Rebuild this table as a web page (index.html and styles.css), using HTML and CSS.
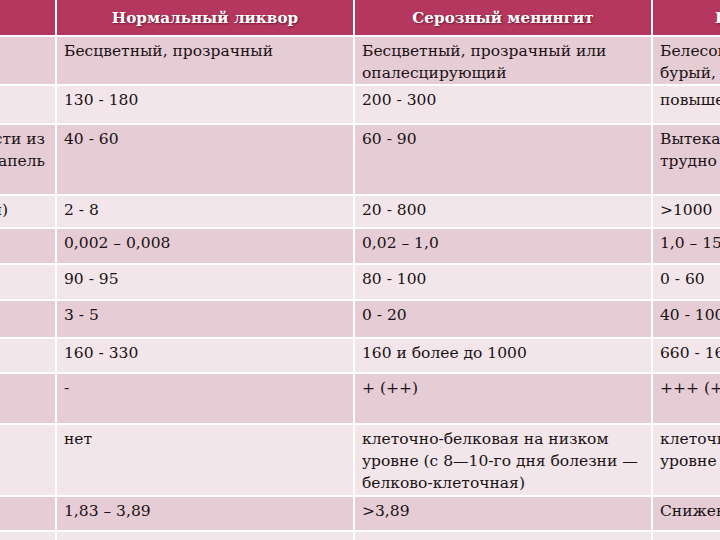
FILE: index.html
```html
<!DOCTYPE html>
<html lang="ru">
<head>
<meta charset="utf-8">
<link rel="stylesheet" href="styles.css">
<title>Ликвор</title>
</head>
<body>
<table class="csf">
  <colgroup>
    <col class="c"><col class="c"><col class="c"><col class="c">
  </colgroup>
  <thead>
    <tr class="head">
      <th></th>
      <th>Нормальный ликвор</th>
      <th>Серозный менингит</th>
      <th>Гнойный менингит</th>
    </tr>
  </thead>
  <tbody>
    <tr class="dark h47">
      <td class="label">Цвет, прозрачность</td>
      <td>Бесцветный, прозрачный</td>
      <td>Бесцветный, прозрачный или опалесцирующий</td>
      <td>Белесоватый, мутный, гнойный<br>бурый, зеленоватый</td>
    </tr>
    <tr class="light h37">
      <td class="label">Давление</td>
      <td>130 - 180</td>
      <td>200 - 300</td>
      <td>повышено</td>
    </tr>
    <tr class="dark h69">
      <td class="label tail">Скорость вытекания жидкости из<br>иглы, количество капель</td>
      <td>40 - 60</td>
      <td>60 - 90</td>
      <td>Вытекает редкими каплями,<br>трудно</td>
    </tr>
    <tr class="light h31">
      <td class="label tail short">Цитоз (кл. в 1 мкл)</td>
      <td>2 - 8</td>
      <td>20 - 800</td>
      <td>&gt;1000</td>
    </tr>
    <tr class="dark h34">
      <td class="label">Белок, г/л</td>
      <td>0,002 – 0,008</td>
      <td>0,02 – 1,0</td>
      <td>1,0 – 15,0</td>
    </tr>
    <tr class="light h34">
      <td class="label">Лимфоциты, %</td>
      <td>90 - 95</td>
      <td>80 - 100</td>
      <td>0 - 60</td>
    </tr>
    <tr class="dark h36">
      <td class="label">Нейтрофилы, %</td>
      <td>3 - 5</td>
      <td>0 - 20</td>
      <td>40 - 100</td>
    </tr>
    <tr class="light h33">
      <td class="label">Белок, мг/л</td>
      <td>160 - 330</td>
      <td>160 и более до 1000</td>
      <td>660 - 1600</td>
    </tr>
    <tr class="dark h49">
      <td class="label">Реакция Панди</td>
      <td>-</td>
      <td>+ (++)</td>
      <td>+++ (++++)</td>
    </tr>
    <tr class="light h70">
      <td class="label">Диссоциация</td>
      <td>нет</td>
      <td>клеточно-белковая на низком уровне (с 8—10-го дня болезни — белково-клеточная)</td>
      <td>клеточно-белковая на высоком<br>уровне</td>
    </tr>
    <tr class="dark h33">
      <td class="label">Глюкоза</td>
      <td>1,83 – 3,89</td>
      <td>&gt;3,89</td>
      <td>Снижена</td>
    </tr>
    <tr class="light h33">
      <td class="label"></td>
      <td></td>
      <td></td>
      <td></td>
    </tr>
  </tbody>
</table>
</body>
</html>
```

FILE: styles.css
```css
html, body {
  margin: 0;
  padding: 0;
  background: #ffffff;
  overflow: hidden;
}

.csf {
  table-layout: fixed;
  border-collapse: separate;
  border-spacing: 2px;
  width: 1194px;
  margin-left: -243px;
  margin-top: -2px;
  font-family: "DejaVu Serif", "Liberation Serif", serif;
  font-size: 15.5px;
  line-height: 22px;
  color: #1a1214;
}

.c { width: 296px; }

.head th {
  height: 35px;
  padding: 0 4px;
  background: #b5375f;
  color: #ffffff;
  font-weight: bold;
  font-size: 15.2px;
  text-align: center;
  vertical-align: middle;
  text-shadow: 1px 1px 2px rgba(60, 0, 20, 0.55);
  white-space: nowrap;
  overflow: visible;
}

td {
  padding: 3px 7px 0;
  vertical-align: top;
  text-align: left;
}

.dark td { background: #e6ccd4; }
.light td { background: #f3e6ea; }

.label { white-space: nowrap; overflow: hidden; }
.tail { text-align: right; padding-right: 10px; }
.short { padding-right: 47px; }

.h31 { height: 31px; }
.h33 { height: 33px; }
.h34 { height: 34px; }
.h36 { height: 36px; }
.h37 { height: 37px; }
.h47 { height: 47px; }
.h49 { height: 49px; }
.h69 { height: 69px; }
.h70 { height: 70px; }
```
